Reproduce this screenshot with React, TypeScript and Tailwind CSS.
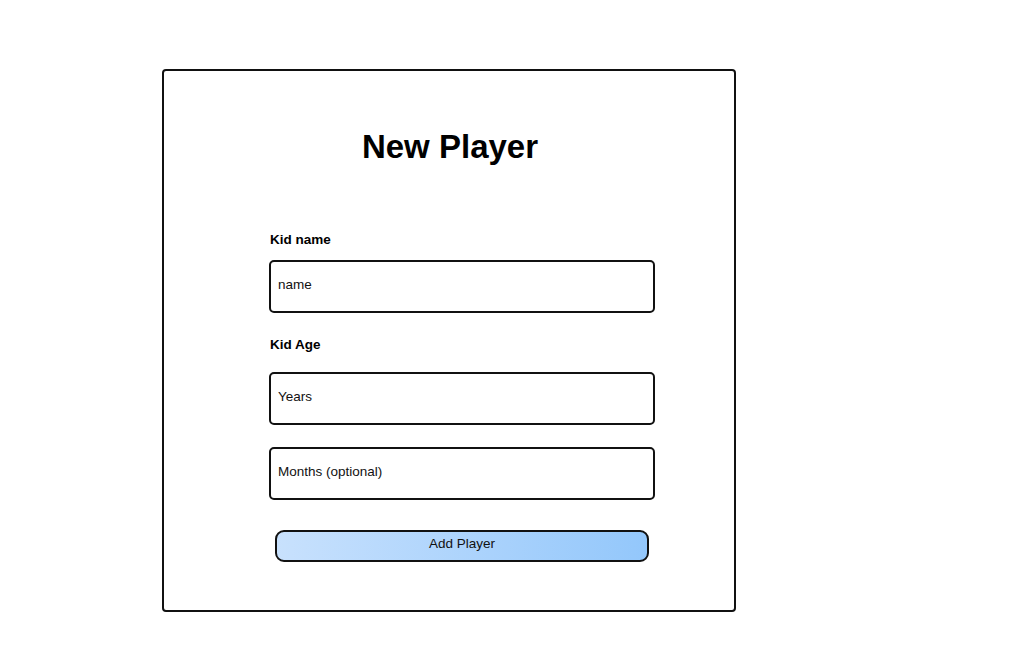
export default function App() {
  return (
    <div className="min-h-screen bg-white pl-[162px] pt-[69px] font-['Liberation_Sans',Arial,sans-serif] text-black">
      <div className="h-[543px] w-[574px] rounded-[4px] border-2 border-[#111] pt-[56px]">
        <h1 className="pl-[2px] text-center text-[33px] font-bold leading-[40px]">New Player</h1>

        <form className="ml-[105px] mt-[65px] flex w-[386px] flex-col">
          <label className="pl-px text-[13.5px] font-bold leading-4">Kid name</label>
          <input
            placeholder="name"
            className="mt-[12px] h-[53px] rounded-[5px] border-2 border-[#111] px-[7px] pb-[5px] text-[13.5px] outline-none placeholder:text-[#111]"
          />

          <label className="mt-[24px] pl-px text-[13.5px] font-bold leading-4">Kid Age</label>
          <input
            placeholder="Years"
            className="mt-[19px] h-[53px] rounded-[5px] border-2 border-[#111] px-[7px] pb-[5px] text-[13.5px] outline-none placeholder:text-[#111]"
          />
          <input
            placeholder="Months (optional)"
            className="mt-[22px] h-[53px] rounded-[5px] border-2 border-[#111] px-[7px] pb-[5px] text-[13.5px] outline-none placeholder:text-[#111]"
          />

          <button
            type="button"
            className="mx-[6px] mt-[30px] h-[32px] rounded-[9px] border-2 border-[#111] bg-gradient-to-r from-[#c8e1fd] to-[#93c7fb] pb-[3px] text-[13.5px] text-[#111]"
          >
            Add Player
          </button>
        </form>
      </div>
    </div>
  );
}
